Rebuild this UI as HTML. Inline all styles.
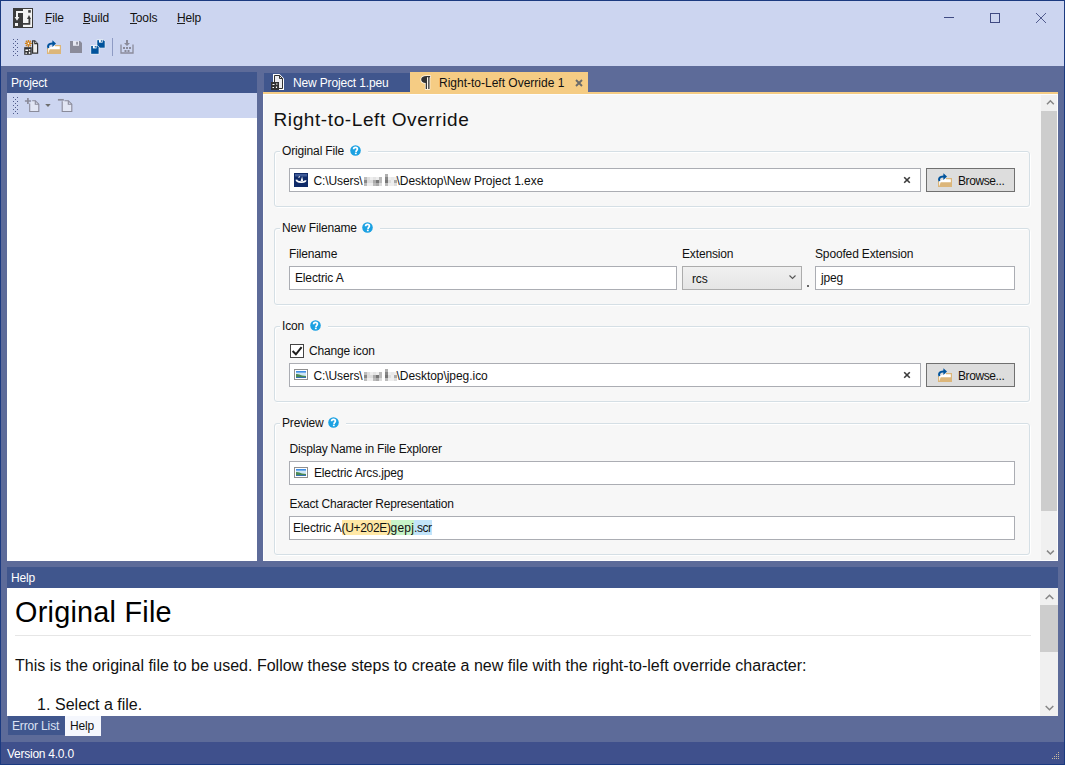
<!DOCTYPE html>
<html><head><meta charset="utf-8">
<style>
*{box-sizing:border-box;margin:0;padding:0}
html,body{width:1065px;height:765px;overflow:hidden;background:#5D6B99;font-family:"Liberation Sans",sans-serif;font-size:12px;color:#111;position:relative}
.a{position:absolute}
svg{position:absolute;overflow:visible}
.t{position:absolute;white-space:nowrap;line-height:12px;font-size:12px;letter-spacing:-0.15px}
.w{color:#fff}
.hdr{position:absolute;background:#40568D}
.gb{position:absolute;border:1px solid #D5DFE5;border-radius:3px}
.gw{position:absolute;border:1px solid #FFFFFF;border-radius:3px}
.leg{position:absolute;background:#F7F7F7;height:14px}
.tb{position:absolute;background:#fff;border:1px solid #ABADB3}
.hq{position:absolute;width:11px;height:11px;border-radius:50%;background:#1BA1E2;color:#fff;font-weight:bold;font-size:9px;line-height:11px;text-align:center}
.sbar{position:absolute;background:#F0F0F0}
.thumb{position:absolute;background:#CDCDCD}
.btn{position:absolute;background:#DDDDDD;border:1px solid #707070}
.blur{position:absolute;width:33px;height:12px}
.blur i{position:absolute;width:3px;height:3px;display:block}
.ul{position:absolute;height:1px;background:#1E1E1E}
</style></head><body>
<div class="a" style="left:0;top:0;width:1065px;height:765px;border:1px solid #1B3A80"></div>
<div class="a" style="left:1px;top:1px;width:1063px;height:65px;background:#CCD5F0"></div>

<!-- app icon -->
<svg style="left:13px;top:8px" width="20" height="20" viewBox="0 0 20 20">
<rect x="0" y="0" width="20" height="20" fill="#3C3C3C"/>
<rect x="10" y="1" width="9" height="18" fill="#F4F4F4"/>
<path d="M3 3h7v2H5v4.2H3z" fill="#F4F4F4"/>
<path d="M1.6 9h4.8L4 12.8z" fill="#F4F4F4"/>
<rect x="2" y="15" width="3" height="3" fill="#F4F4F4"/>
<path d="M10 15h5.5v-4.2h1.8v5.9H10z" fill="#3C3C3C"/>
<path d="M14 11h4L16 7z" fill="#3C3C3C"/>
<rect x="15.2" y="2.1" width="2.6" height="2.6" fill="#3C3C3C"/>
</svg>

<!-- menu -->
<div class="t" style="left:45px;top:12px">File</div><div class="ul" style="left:45px;top:23px;width:6px"></div>
<div class="t" style="left:83px;top:12px">Build</div><div class="ul" style="left:83px;top:23px;width:7px"></div>
<div class="t" style="left:130px;top:12px">Tools</div><div class="ul" style="left:130px;top:23px;width:7px"></div>
<div class="t" style="left:177px;top:12px">Help</div><div class="ul" style="left:177px;top:23px;width:8px"></div>

<!-- window controls -->
<svg style="left:944px;top:12px" width="104" height="12" viewBox="0 0 104 12">
<path d="M0 5.5h10" stroke="#3F4A82" stroke-width="1"/>
<rect x="46.5" y="1.5" width="9" height="9" fill="none" stroke="#3F4A82" stroke-width="1"/>
<path d="M92 1l10 10M102 1l-10 10" stroke="#4A5488" stroke-width="0.95"/>
</svg>

<!-- toolbar -->
<svg style="left:13px;top:39px" width="6" height="18" viewBox="0 0 6 18">
<g fill="#4E5A8C"><rect x="0" y="0" width="1" height="1"/><rect x="4" y="0" width="1" height="1"/><rect x="2" y="2" width="1" height="1"/><rect x="0" y="4" width="1" height="1"/><rect x="4" y="4" width="1" height="1"/><rect x="2" y="6" width="1" height="1"/><rect x="0" y="8" width="1" height="1"/><rect x="4" y="8" width="1" height="1"/><rect x="2" y="10" width="1" height="1"/><rect x="0" y="12" width="1" height="1"/><rect x="4" y="12" width="1" height="1"/><rect x="2" y="14" width="1" height="1"/><rect x="0" y="16" width="1" height="1"/><rect x="4" y="16" width="1" height="1"/></g>
</svg>
<svg style="left:22px;top:37px" width="18" height="20" viewBox="0 0 18 20">
<path d="M10.6 3.9H12.8L15.6 6.7V16.2H10.6z" fill="#EDEDED" stroke="#333" stroke-width="1.2"/>
<path d="M12.8 3.9V6.7H15.6" fill="#fff" stroke="#333" stroke-width="1.2"/>
<path d="M6.4 2.9V9.9M2.9 6.4H9.9" stroke="#D0811A" stroke-width="1.3"/>
<g fill="#D0811A"><circle cx="4.5" cy="4.5" r="0.9"/><circle cx="8.3" cy="4.5" r="0.9"/><circle cx="4.5" cy="8.4" r="0.9"/><circle cx="8.3" cy="8.4" r="0.9"/><circle cx="6.4" cy="6.4" r="1.8"/></g>
<circle cx="6.4" cy="6.4" r="0.8" fill="#fff"/>
<rect x="2.2" y="10.2" width="7.5" height="7.6" fill="#333"/>
<path d="M3.4 12.4h2.6v1.5H3.4zM6.8 12.1h1.5v1.5H6.8zM3.4 15.4h1.7v1.3H3.4zM6.8 14.8h1.5v2H6.8z" fill="#fff"/>
</svg>
<svg style="left:45px;top:38px" width="16" height="16" viewBox="0 0 16 16"><path d="M2.6 10v5.4h12.8V7.6H10" fill="#fff" stroke="#DCB67A" stroke-width="1.2"/>
<path d="M4.6 11.2H16l-1 4.4H3.2z" fill="#DCB67A"/>
<path d="M3.4 10.2C2.2 7.2 4 5.6 7.2 5.6H9" fill="none" stroke="#00539C" stroke-width="2"/>
<path d="M7.4 2.2L11 5.6L7.4 9z" fill="#00539C"/></svg>
<svg style="left:70px;top:41px" width="13" height="13" viewBox="0 0 13 13">
<path d="M0 0h10l2 2v10H0z" fill="#8A8B9A"/>
<rect x="3" y="0" width="6" height="4.8" fill="#E6E8F2"/>
<rect x="6.2" y="0.8" width="1.7" height="2.8" fill="#8A8B9A"/>
</svg>
<svg style="left:90px;top:39px" width="17" height="17" viewBox="0 0 17 17">
<path d="M6.8 0.7h6.6l1.8 1.8v6.7H6.8z" fill="#00539C" stroke="#F4F6FC" stroke-width="0.9"/>
<rect x="9" y="0.9" width="3.6" height="2.7" fill="#fff"/><rect x="10.8" y="1.3" width="1.2" height="1.4" fill="#00539C"/>
<path d="M0.7 6.5h6.6l1.8 1.8v7H0.7z" fill="#00539C" stroke="#F4F6FC" stroke-width="0.9"/>
<rect x="2.9" y="6.7" width="3.6" height="2.7" fill="#fff"/><rect x="4.7" y="7.1" width="1.2" height="1.4" fill="#00539C"/>
</svg>
<div class="a" style="left:112px;top:38px;width:1px;height:18px;background:#8E9BC4"></div>
<svg style="left:120px;top:40px" width="14" height="14" viewBox="0 0 14 14">
<path d="M1 4.5v8.5h12V4.5" fill="none" stroke="#8A8B9A" stroke-width="1.3"/>
<path d="M6 0h2v3h2l-3 3-3-3h2z" fill="#8A8B9A"/>
<g fill="#8A8B9A"><rect x="3" y="7" width="2" height="2"/><rect x="6" y="7" width="2" height="2"/><rect x="9" y="7" width="2" height="2"/><rect x="4.5" y="10" width="2" height="2"/><rect x="7.5" y="10" width="2" height="2"/></g>
</svg>

<!-- Project panel -->
<div class="hdr" style="left:7px;top:72px;width:250px;height:21px"></div>
<div class="t w" style="left:11px;top:77px">Project</div>
<div class="a" style="left:7px;top:93px;width:250px;height:25px;background:#CCD5F0"></div>
<svg style="left:13px;top:97px" width="6" height="18" viewBox="0 0 6 18">
<g fill="#4E5A8C"><rect x="0" y="0" width="1" height="1"/><rect x="4" y="0" width="1" height="1"/><rect x="2" y="2" width="1" height="1"/><rect x="0" y="4" width="1" height="1"/><rect x="4" y="4" width="1" height="1"/><rect x="2" y="6" width="1" height="1"/><rect x="0" y="8" width="1" height="1"/><rect x="4" y="8" width="1" height="1"/><rect x="2" y="10" width="1" height="1"/><rect x="0" y="12" width="1" height="1"/><rect x="4" y="12" width="1" height="1"/><rect x="2" y="14" width="1" height="1"/><rect x="0" y="16" width="1" height="1"/><rect x="4" y="16" width="1" height="1"/></g>
</svg>
<svg style="left:25px;top:98px" width="50" height="15" viewBox="0 0 50 15">
<path d="M4.7 5.5V13.5H13.8V6.2L10.3 2.7H7.2" fill="#E2E6F4" stroke="#8A8B9A" stroke-width="1.1"/>
<path d="M10.3 2.7V6.2H13.8" fill="none" stroke="#8A8B9A" stroke-width="1.1"/>
<path d="M-0.1 3H5.9M2.9 0V6" stroke="#8A8B9A" stroke-width="1.7"/>
<path d="M20.2 6H25.7L23 9z" fill="#6E6E6E"/>
<path d="M37.2 3.2V13.5H46.8V6.2L43.3 2.7H39.5" fill="#E2E6F4" stroke="#8A8B9A" stroke-width="1.1"/>
<path d="M43.3 2.7V6.2H46.8" fill="none" stroke="#8A8B9A" stroke-width="1.1"/>
<path d="M32.9 1.8H38.8" stroke="#8A8B9A" stroke-width="1.7"/>
</svg>
<div class="a" style="left:7px;top:118px;width:250px;height:443px;background:#fff"></div>

<!-- document tabs -->
<div class="hdr" style="left:264px;top:73px;width:146px;height:19px"></div>
<svg style="left:271px;top:74px" width="16" height="17" viewBox="0 0 16 17">
<path d="M2 0h6.5l4.5 4.5V16H2z" fill="#fff"/>
<path d="M3.5 1.5h5l3 3v10h-8z" fill="#EDEDF0" stroke="#333" stroke-width="1"/>
<path d="M8.5 1.5v3h3" fill="none" stroke="#333"/>
<rect x="0" y="8" width="8" height="8" fill="#333"/>
<path d="M1.5 10.5h2M5 10h1.5M1.5 13.5h1.5M5.5 12.5v1.5" stroke="#fff" stroke-width="1.2"/>
</svg>
<div class="t w" style="left:293px;top:77px">New Project 1.peu</div>
<div class="a" style="left:410px;top:72px;width:178px;height:20px;background:#F5CC84"></div>
<svg style="left:420px;top:75px" width="12" height="15" viewBox="0 0 12 15">
<path d="M6.5 1H10.2V2.3H9.5V14H8.2V2.3H7V14H5.7V8C3 8 1.2 6.6 1.2 4.5S3 1 6.5 1z" fill="#FFF8EE" stroke="#FFF8EE" stroke-width="1.6" stroke-linejoin="round"/>
<path d="M6.5 1H10.2V2.3H9.5V14H8.2V2.3H7V14H5.7V8C3 8 1.2 6.6 1.2 4.5S3 1 6.5 1z" fill="#333"/>
</svg>
<div class="t" style="left:439px;top:77px;letter-spacing:0">Right-to-Left Override 1</div>
<svg style="left:575px;top:79px" width="8" height="8" viewBox="0 0 8 8"><path d="M1 1l6 6M7 1l-6 6" stroke="#6A6A6A" stroke-width="1.9"/></svg>
<div class="a" style="left:263px;top:92px;width:795px;height:2px;background:#F5CC84"></div>
<div class="a" style="left:263px;top:94px;width:795px;height:467px;background:#F7F7F7;border:1px solid #FDFDFD"></div>
<div class="sbar" style="left:1041px;top:95px;width:16px;height:465px"></div>
<div class="thumb" style="left:1041px;top:111px;width:16px;height:400px"></div>
<svg style="left:1046px;top:99px" width="9" height="7" viewBox="0 0 9 7"><path d="M1 5.2L4.4 1.8L7.8 5.2" fill="none" stroke="#868686" stroke-width="1.5"/></svg>
<svg style="left:1046px;top:549px" width="9" height="7" viewBox="0 0 9 7"><path d="M1 1.6L4.4 5L7.8 1.6" fill="none" stroke="#868686" stroke-width="1.5"/></svg>

<!-- form -->
<div class="t" style="left:273.5px;top:109.5px;font-size:19px;line-height:19px;letter-spacing:0.6px">Right-to-Left Override</div>

<!-- Original File group -->
<div class="gw" style="left:275px;top:152px;width:756px;height:56px"></div><div class="gb" style="left:274px;top:151px;width:756px;height:56px"></div>
<div class="leg" style="left:280px;top:144px;width:88px"></div>
<div class="t" style="left:282px;top:145px">Original File</div>
<svg style="left:350px;top:145px" width="11" height="11" viewBox="0 0 11 11"><circle cx="5.5" cy="5.5" r="5.3" fill="#1BA1E2"/><path d="M3.6 4.3C3.6 3.1 4.4 2.4 5.5 2.4S7.4 3.1 7.4 4.1C7.4 5.3 6.1 5.4 6.1 6.5V6.9" fill="none" stroke="#fff" stroke-width="1.7"/><rect x="4.9" y="7.6" width="1.8" height="1.6" fill="#fff"/></svg>
<div class="tb" style="left:289px;top:168px;width:632px;height:24px"></div>
<svg style="left:294px;top:173px" width="14" height="14" viewBox="0 0 14 14">
<rect width="14" height="14" fill="#0F2A68"/>
<rect x="1" y="1" width="12" height="2.5" fill="#4A66A2" opacity="0.8"/>
<path d="M2.4 6.6C2.6 9.6 11.4 10 11.6 7.2" fill="none" stroke="#fff" stroke-width="1.8"/>
<path d="M6.6 8L8.1 3.5L9.2 8z" fill="#fff"/>
<path d="M3.8 4.6L5.8 2.8V4.6z" fill="#fff"/>
</svg>
<div class="t" style="left:313.5px;top:175px;letter-spacing:-0.1px">C:\Users\</div>
<div class="blur" style="left:364px;top:174px"><i style="left:21px;top:0px;background:#B0B0B0"></i><i style="left:0px;top:3px;background:#BDBDBD"></i><i style="left:3px;top:3px;background:#DEDEDE"></i><i style="left:6px;top:3px;background:#EEEEEE"></i><i style="left:9px;top:3px;background:#E4E4E4"></i><i style="left:12px;top:3px;background:#EEEEEE"></i><i style="left:15px;top:3px;background:#BBBBBB"></i><i style="left:21px;top:3px;background:#888888"></i><i style="left:24px;top:3px;background:#EEEEEE"></i><i style="left:27px;top:3px;background:#E8E8E8"></i><i style="left:30px;top:3px;background:#EEEEEE"></i><i style="left:0px;top:6px;background:#888888"></i><i style="left:3px;top:6px;background:#DDDDDD"></i><i style="left:6px;top:6px;background:#DDDDDD"></i><i style="left:9px;top:6px;background:#AAAAAA"></i><i style="left:12px;top:6px;background:#777777"></i><i style="left:15px;top:6px;background:#BBBBBB"></i><i style="left:21px;top:6px;background:#777777"></i><i style="left:24px;top:6px;background:#DDDDDD"></i><i style="left:27px;top:6px;background:#EEEEEE"></i><i style="left:30px;top:6px;background:#AAAAAA"></i><i style="left:0px;top:9px;background:#BBBBBB"></i><i style="left:3px;top:9px;background:#EEEEEE"></i><i style="left:6px;top:9px;background:#EEEEEE"></i><i style="left:9px;top:9px;background:#BBBBBB"></i><i style="left:12px;top:9px;background:#AAAAAA"></i><i style="left:15px;top:9px;background:#DDDDDD"></i><i style="left:21px;top:9px;background:#BBBBBB"></i><i style="left:24px;top:9px;background:#EEEEEE"></i><i style="left:27px;top:9px;background:#EEEEEE"></i><i style="left:30px;top:9px;background:#DDDDDD"></i></div>
<div class="t" style="left:396.5px;top:175px;letter-spacing:-0.05px">\Desktop\New Project 1.exe</div>
<svg style="left:903px;top:176px" width="8" height="8" viewBox="0 0 8 8"><path d="M1.2 1.2l5.6 5.6M6.8 1.2l-5.6 5.6" stroke="#3A3A3A" stroke-width="1.6"/></svg>
<div class="btn" style="left:926px;top:168px;width:89px;height:24px"></div>
<svg style="left:936px;top:171px" width="16" height="16" viewBox="0 0 16 16"><path d="M2.6 10v5.4h12.8V7.6H10" fill="#fff" stroke="#DCB67A" stroke-width="1.2"/>
<path d="M4.6 11.2H16l-1 4.4H3.2z" fill="#DCB67A"/>
<path d="M3.4 10.2C2.2 7.2 4 5.6 7.2 5.6H9" fill="none" stroke="#00539C" stroke-width="2"/>
<path d="M7.4 2.2L11 5.6L7.4 9z" fill="#00539C"/></svg>
<div class="t" style="left:958px;top:175px;letter-spacing:-0.4px">Browse...</div>

<!-- New Filename group -->
<div class="gw" style="left:275px;top:229px;width:756px;height:77px"></div><div class="gb" style="left:274px;top:228px;width:756px;height:77px"></div>
<div class="leg" style="left:280px;top:221px;width:100px"></div>
<div class="t" style="left:282px;top:222px">New Filename</div>
<svg style="left:362px;top:222px" width="11" height="11" viewBox="0 0 11 11"><circle cx="5.5" cy="5.5" r="5.3" fill="#1BA1E2"/><path d="M3.6 4.3C3.6 3.1 4.4 2.4 5.5 2.4S7.4 3.1 7.4 4.1C7.4 5.3 6.1 5.4 6.1 6.5V6.9" fill="none" stroke="#fff" stroke-width="1.7"/><rect x="4.9" y="7.6" width="1.8" height="1.6" fill="#fff"/></svg>
<div class="t" style="left:289px;top:248px">Filename</div>
<div class="tb" style="left:289px;top:266px;width:388px;height:24px"></div>
<div class="t" style="left:295px;top:272px">Electric A</div>
<div class="t" style="left:682px;top:248px">Extension</div>
<div class="a" style="left:682px;top:266px;width:120px;height:24px;border:1px solid #ACACAC;background:linear-gradient(#F0F0F0,#E5E5E5)"></div>
<div class="t" style="left:692px;top:273px">rcs</div>
<svg style="left:789px;top:275px" width="7" height="5" viewBox="0 0 7 5"><path d="M0.5 0.5L3.5 3.5L6.5 0.5" fill="none" stroke="#555" stroke-width="1.1"/></svg>
<div class="a" style="left:807px;top:285px;width:2px;height:2px;background:#666"></div>
<div class="t" style="left:815px;top:248px">Spoofed Extension</div>
<div class="tb" style="left:815px;top:266px;width:200px;height:24px"></div>
<div class="t" style="left:821px;top:272px">jpeg</div>

<!-- Icon group -->
<div class="gw" style="left:275px;top:327px;width:756px;height:76px"></div><div class="gb" style="left:274px;top:326px;width:756px;height:76px"></div>
<div class="leg" style="left:280px;top:319px;width:48px"></div>
<div class="t" style="left:282px;top:320px">Icon</div>
<svg style="left:310px;top:320px" width="11" height="11" viewBox="0 0 11 11"><circle cx="5.5" cy="5.5" r="5.3" fill="#1BA1E2"/><path d="M3.6 4.3C3.6 3.1 4.4 2.4 5.5 2.4S7.4 3.1 7.4 4.1C7.4 5.3 6.1 5.4 6.1 6.5V6.9" fill="none" stroke="#fff" stroke-width="1.7"/><rect x="4.9" y="7.6" width="1.8" height="1.6" fill="#fff"/></svg>
<div class="a" style="left:290px;top:344px;width:14px;height:14px;border:1px solid #444;background:#fff"></div>
<svg style="left:290px;top:344px" width="14" height="14" viewBox="0 0 14 14"><path d="M2.6 7l3.3 3.3L11.6 3.2" fill="none" stroke="#1E1E1E" stroke-width="2"/></svg>
<div class="t" style="left:309px;top:345px">Change icon</div>
<div class="tb" style="left:289px;top:363px;width:632px;height:24px"></div>
<svg style="left:294px;top:369px" width="14" height="11" viewBox="0 0 14 11"><rect x="0.5" y="0.5" width="13" height="10" fill="#fff" stroke="#8F8F8F"/>
<rect x="2" y="2" width="10" height="7" fill="#CFE6F5"/>
<rect x="2" y="2" width="10" height="1.6" fill="#3F8EE6"/>
<path d="M2 5.2C4 4.8 6 6 8 6.4L12 7V9H2z" fill="#4C8A55"/>
<rect x="2" y="8" width="10" height="1" fill="#3470B0"/></svg>
<div class="t" style="left:313.5px;top:370px;letter-spacing:-0.1px">C:\Users\</div>
<div class="blur" style="left:364px;top:369px"><i style="left:21px;top:0px;background:#B0B0B0"></i><i style="left:0px;top:3px;background:#BDBDBD"></i><i style="left:3px;top:3px;background:#DEDEDE"></i><i style="left:6px;top:3px;background:#EEEEEE"></i><i style="left:9px;top:3px;background:#E4E4E4"></i><i style="left:12px;top:3px;background:#EEEEEE"></i><i style="left:15px;top:3px;background:#BBBBBB"></i><i style="left:21px;top:3px;background:#888888"></i><i style="left:24px;top:3px;background:#EEEEEE"></i><i style="left:27px;top:3px;background:#E8E8E8"></i><i style="left:30px;top:3px;background:#EEEEEE"></i><i style="left:0px;top:6px;background:#888888"></i><i style="left:3px;top:6px;background:#DDDDDD"></i><i style="left:6px;top:6px;background:#DDDDDD"></i><i style="left:9px;top:6px;background:#AAAAAA"></i><i style="left:12px;top:6px;background:#777777"></i><i style="left:15px;top:6px;background:#BBBBBB"></i><i style="left:21px;top:6px;background:#777777"></i><i style="left:24px;top:6px;background:#DDDDDD"></i><i style="left:27px;top:6px;background:#EEEEEE"></i><i style="left:30px;top:6px;background:#AAAAAA"></i><i style="left:0px;top:9px;background:#BBBBBB"></i><i style="left:3px;top:9px;background:#EEEEEE"></i><i style="left:6px;top:9px;background:#EEEEEE"></i><i style="left:9px;top:9px;background:#BBBBBB"></i><i style="left:12px;top:9px;background:#AAAAAA"></i><i style="left:15px;top:9px;background:#DDDDDD"></i><i style="left:21px;top:9px;background:#BBBBBB"></i><i style="left:24px;top:9px;background:#EEEEEE"></i><i style="left:27px;top:9px;background:#EEEEEE"></i><i style="left:30px;top:9px;background:#DDDDDD"></i></div>
<div class="t" style="left:396.5px;top:370px;letter-spacing:-0.05px">\Desktop\jpeg.ico</div>
<svg style="left:903px;top:371px" width="8" height="8" viewBox="0 0 8 8"><path d="M1.2 1.2l5.6 5.6M6.8 1.2l-5.6 5.6" stroke="#3A3A3A" stroke-width="1.6"/></svg>
<div class="btn" style="left:926px;top:363px;width:89px;height:24px"></div>
<svg style="left:936px;top:366px" width="16" height="16" viewBox="0 0 16 16"><path d="M2.6 10v5.4h12.8V7.6H10" fill="#fff" stroke="#DCB67A" stroke-width="1.2"/>
<path d="M4.6 11.2H16l-1 4.4H3.2z" fill="#DCB67A"/>
<path d="M3.4 10.2C2.2 7.2 4 5.6 7.2 5.6H9" fill="none" stroke="#00539C" stroke-width="2"/>
<path d="M7.4 2.2L11 5.6L7.4 9z" fill="#00539C"/></svg>
<div class="t" style="left:958px;top:370px;letter-spacing:-0.4px">Browse...</div>

<!-- Preview group -->
<div class="gw" style="left:275px;top:424px;width:756px;height:132px"></div><div class="gb" style="left:274px;top:423px;width:756px;height:132px"></div>
<div class="leg" style="left:280px;top:416px;width:66px"></div>
<div class="t" style="left:282px;top:417px">Preview</div>
<svg style="left:328px;top:417px" width="11" height="11" viewBox="0 0 11 11"><circle cx="5.5" cy="5.5" r="5.3" fill="#1BA1E2"/><path d="M3.6 4.3C3.6 3.1 4.4 2.4 5.5 2.4S7.4 3.1 7.4 4.1C7.4 5.3 6.1 5.4 6.1 6.5V6.9" fill="none" stroke="#fff" stroke-width="1.7"/><rect x="4.9" y="7.6" width="1.8" height="1.6" fill="#fff"/></svg>
<div class="t" style="left:289.5px;top:443px;letter-spacing:-0.2px">Display Name in File Explorer</div>
<div class="tb" style="left:289px;top:461px;width:726px;height:24px"></div>
<svg style="left:294px;top:467px" width="14" height="11" viewBox="0 0 14 11"><rect x="0.5" y="0.5" width="13" height="10" fill="#fff" stroke="#8F8F8F"/>
<rect x="2" y="2" width="10" height="7" fill="#CFE6F5"/>
<rect x="2" y="2" width="10" height="1.6" fill="#3F8EE6"/>
<path d="M2 5.2C4 4.8 6 6 8 6.4L12 7V9H2z" fill="#4C8A55"/>
<rect x="2" y="8" width="10" height="1" fill="#3470B0"/></svg>
<div class="t" style="left:314px;top:467px">Electric Arcs.jpeg</div>
<div class="t" style="left:289.5px;top:498px;letter-spacing:-0.22px">Exact Character Representation</div>
<div class="tb" style="left:289px;top:516px;width:726px;height:24px"></div>
<div class="t" style="left:293px;top:522px;letter-spacing:-0.15px"><span>Electric A</span><span style="background:#FFE8A6;display:inline-block;height:15px;margin-top:-2px;padding-top:2px;vertical-align:top;letter-spacing:-0.33px">(U+202E)</span><span style="background:#C8F5C8;display:inline-block;height:15px;margin-top:-2px;padding-top:2px;vertical-align:top;letter-spacing:0.18px">gepj</span><span style="background:#C2E4FA;display:inline-block;height:15px;margin-top:-2px;padding-top:2px;vertical-align:top;letter-spacing:-0.45px">.scr</span></div>

<!-- Help panel -->
<div class="hdr" style="left:7px;top:567px;width:1051px;height:21px"></div>
<div class="t w" style="left:11px;top:572px">Help</div>
<div class="a" style="left:7px;top:588px;width:1051px;height:128px;background:#fff"></div>
<div class="t" style="left:15px;top:598px;font-size:28.8px;line-height:29px;color:#000;letter-spacing:0.25px">Original File</div>
<div class="a" style="left:15px;top:635px;width:1016px;height:1px;background:#E6E6E6"></div>
<div class="t" style="left:15px;top:658px;font-size:16px;line-height:16px;color:#111;letter-spacing:0">This is the original file to be used. Follow these steps to create a new file with the right-to-left override character:</div>
<div class="t" style="left:37px;top:697px;font-size:16px;line-height:16px;color:#111;letter-spacing:0">1.</div>
<div class="t" style="left:55px;top:697px;font-size:16px;line-height:16px;color:#111;letter-spacing:0">Select a file.</div>
<div class="sbar" style="left:1040px;top:588px;width:18px;height:128px"></div>
<div class="thumb" style="left:1040px;top:605px;width:18px;height:47px"></div>
<svg style="left:1045px;top:594px" width="9" height="6" viewBox="0 0 9 6"><path d="M0.7 5L4.5 1.2L8.3 5" fill="none" stroke="#868686" stroke-width="1.5"/></svg>
<svg style="left:1045px;top:705px" width="9" height="6" viewBox="0 0 9 6"><path d="M0.7 1L4.5 4.8L8.3 1" fill="none" stroke="#868686" stroke-width="1.5"/></svg>

<!-- bottom tabs -->
<div class="hdr" style="left:8px;top:716px;width:57px;height:19px"></div>
<div class="t" style="left:12px;top:720px;color:#DCE2F4">Error List</div>
<div class="a" style="left:65px;top:716px;width:36px;height:20px;background:#F5F7FD"></div>
<div class="t" style="left:70px;top:720px">Help</div>

<!-- status bar -->
<div class="a" style="left:1px;top:742px;width:1063px;height:22px;background:#3F508C"></div>
<div class="t w" style="left:7px;top:748px;letter-spacing:-0.25px">Version 4.0.0</div>
<svg style="left:1052px;top:752px" width="9" height="9" viewBox="0 0 9 9"><g fill="#C8B89C"><rect x="6" y="0" width="1" height="1"/><rect x="4" y="2" width="1" height="1"/><rect x="6" y="2" width="1" height="1"/><rect x="2" y="4" width="1" height="1"/><rect x="4" y="4" width="1" height="1"/><rect x="6" y="4" width="1" height="1"/><rect x="0" y="6" width="1" height="1"/><rect x="2" y="6" width="1" height="1"/><rect x="4" y="6" width="1" height="1"/><rect x="6" y="6" width="1" height="1"/></g></svg>

</body></html>
